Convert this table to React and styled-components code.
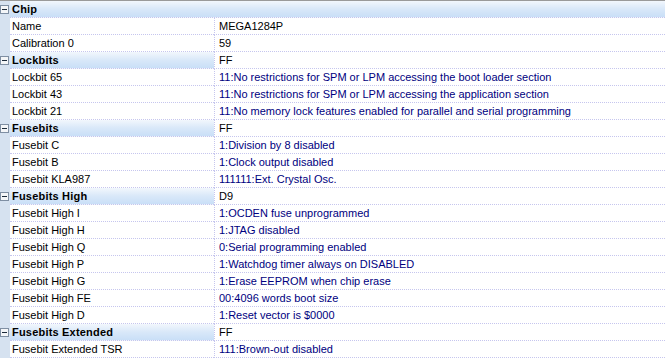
import React from 'react';
import styled, { createGlobalStyle } from 'styled-components';

const GlobalStyle = createGlobalStyle`
  html, body {
    margin: 0;
    padding: 0;
    background: #ffffff;
    overflow: hidden;
  }
`;

const Grid = styled.div`
  width: 665px;
  height: 364px;
  box-sizing: border-box;
  border-top: 1px solid #9a9a9a;
  background: #ffffff;
  font-family: "Liberation Sans", Arial, sans-serif;
  font-size: 11px;
  color: #000000;
  overflow: hidden;
`;

const Row = styled.div`
  display: grid;
  grid-template-columns: 10px 204px 1fr;
  height: 17px;
`;

const Margin = styled.div`
  background: #d6e2f0;
  position: relative;
`;

const Label = styled.div`
  box-sizing: border-box;
  display: flex;
  align-items: center;
  padding-left: 2px;
  border-bottom: 1px dotted #c6c6ee;
  white-space: nowrap;
  overflow: hidden;
  font-weight: ${p => (p.$category ? 'bold' : 'normal')};
  letter-spacing: ${p => (p.$category ? '0.2px' : '0')};
  grid-column: ${p => (p.$wide ? '2 / 4' : 'auto')};
  background: ${p =>
    p.$category
      ? 'linear-gradient(180deg, #f2f7fd 0%, #d9e8f9 50%, #c9dff7 100%)'
      : '#ffffff'};
`;

const Value = styled.div`
  box-sizing: border-box;
  display: flex;
  align-items: center;
  padding-left: 4px;
  border-left: 1px dotted #c6c6ee;
  border-bottom: 1px dotted #c6c6ee;
  white-space: nowrap;
  overflow: hidden;
  color: ${p => (p.$plain ? '#000000' : '#000080')};
`;

const Toggle = styled.svg`
  position: absolute;
  left: 0;
  top: 4px;
`;

const Collapse = () => (
  <Toggle width="9" height="9" viewBox="0 0 9 9">
    <rect x="0.5" y="0.5" width="8" height="8" fill="#f4f6f8" stroke="#7f8fa3" />
    <line x1="2" y1="4.5" x2="7" y2="4.5" stroke="#1c2a3a" />
  </Toggle>
);

const sections = [
  {
    name: 'Chip',
    items: [
      ['Name', 'MEGA1284P', true],
      ['Calibration 0', '59', true],
    ],
  },
  {
    name: 'Lockbits',
    value: 'FF',
    items: [
      ['Lockbit 65', '11:No restrictions for SPM or LPM accessing the boot loader section'],
      ['Lockbit 43', '11:No restrictions for SPM or LPM accessing the application section'],
      ['Lockbit 21', '11:No memory lock features enabled for parallel and serial programming'],
    ],
  },
  {
    name: 'Fusebits',
    value: 'FF',
    items: [
      ['Fusebit C', '1:Division by 8 disabled'],
      ['Fusebit B', '1:Clock output disabled'],
      ['Fusebit KLA987', '111111:Ext. Crystal Osc.'],
    ],
  },
  {
    name: 'Fusebits High',
    value: 'D9',
    items: [
      ['Fusebit High I', '1:OCDEN fuse unprogrammed'],
      ['Fusebit High H', '1:JTAG disabled'],
      ['Fusebit High Q', '0:Serial programming enabled'],
      ['Fusebit High P', '1:Watchdog timer always on DISABLED'],
      ['Fusebit High G', '1:Erase EEPROM when chip erase'],
      ['Fusebit High FE', '00:4096 words boot size'],
      ['Fusebit High D', '1:Reset vector is $0000'],
    ],
  },
  {
    name: 'Fusebits Extended',
    value: 'FF',
    items: [['Fusebit Extended TSR', '111:Brown-out disabled']],
  },
];

const App = () => (
  <>
    <GlobalStyle />
    <Grid>
      {sections.map(section => (
        <React.Fragment key={section.name}>
          <Row>
            <Margin>
              <Collapse />
            </Margin>
            <Label $category $wide={!section.value}>
              {section.name}
            </Label>
            {section.value && <Value $plain>{section.value}</Value>}
          </Row>
          {section.items.map(([label, value, plain]) => (
            <Row key={label}>
              <Margin />
              <Label>{label}</Label>
              <Value $plain={plain}>{value}</Value>
            </Row>
          ))}
        </React.Fragment>
      ))}
    </Grid>
  </>
);

export default App;
